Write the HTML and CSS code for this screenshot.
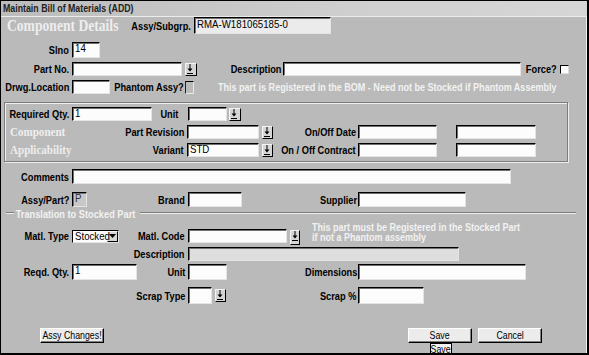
FILE: index.html
```html
<!DOCTYPE html>
<html lang="en">
<head>
    <meta charset="UTF-8">
    <title>Maintain Bill of Materials (ADD)</title>
    <link rel="stylesheet" href="styles.css">
</head>
<body>
<div class="window">
    <div class="titlebar"><span>Maintain Bill of Materials (ADD)</span></div>

    <div class="row r-head">
        <div class="heading"><span>Component Details</span></div>
        <div class="fld f-subgrp"><label><span>Assy/Subgrp.</span></label><div class="in ro"><span>RMA-W181065185-0</span></div></div>
    </div>

    <div class="row r-slno">
        <div class="fld f-slno"><label><span>Slno</span></label><div class="in"><span>14</span></div></div>
    </div>

    <div class="row r-part">
        <div class="fld f-partno"><label><span>Part No.</span></label><div class="in"></div><span class="dd"><svg viewBox="0 0 8 10" width="8" height="10"><path d="M3.5 0h1v4.5h2L4 7.5 1.5 4.5h2z M1 9h6v1H1z"/></svg></span></div>
        <div class="fld f-desc"><label class="g1"><span>Description</span></label><div class="in"></div></div>
        <div class="fld f-force"><label><span>Force?</span></label><div class="chk"></div></div>
    </div>

    <div class="row r-drwg">
        <div class="fld f-drwg"><label><span>Drwg.Location</span></label><div class="in"></div></div>
        <div class="fld f-phantom"><label class="g1"><span>Phantom Assy?</span></label><div class="chk tall"></div></div>
        <div class="note n-bom"><span>This part is Registered in the BOM - Need not be Stocked if Phantom Assembly</span></div>
    </div>

    <div class="group">
        <div class="row r-grp">
            <div class="fld f-reqqty"><label><span>Required Qty.</span></label><div class="in"><span>1</span></div></div>
            <div class="fld f-unit1"><label class="g10"><span>Unit</span></label><div class="in"></div><span class="dd"><svg viewBox="0 0 8 10" width="8" height="10"><path d="M3.5 0h1v4.5h2L4 7.5 1.5 4.5h2z M1 9h6v1H1z"/></svg></span></div>
        </div>
        <div class="row r-grp">
            <div class="side"><span>Component</span></div>
            <div class="fld f-rev"><label><span>Part Revision</span></label><div class="in"></div><span class="dd"><svg viewBox="0 0 8 10" width="8" height="10"><path d="M3.5 0h1v4.5h2L4 7.5 1.5 4.5h2z M1 9h6v1H1z"/></svg></span></div>
            <div class="fld f-onoff"><label class="g2"><span>On/Off Date</span></label><div class="in"></div></div>
            <div class="in i-onoff2"></div>
        </div>
        <div class="row r-grp">
            <div class="side"><span>Applicability</span></div>
            <div class="fld f-rev"><label><span>Variant</span></label><div class="in"><span>STD</span></div><span class="dd"><svg viewBox="0 0 8 10" width="8" height="10"><path d="M3.5 0h1v4.5h2L4 7.5 1.5 4.5h2z M1 9h6v1H1z"/></svg></span></div>
            <div class="fld f-onoff"><label class="g2"><span>On / Off Contract</span></label><div class="in"></div></div>
            <div class="in i-onoff2"></div>
        </div>
    </div>

    <div class="row r-comments">
        <div class="fld f-comments"><label><span>Comments</span></label><div class="in"></div></div>
    </div>

    <div class="row r-assy">
        <div class="fld f-assypart"><label><span>Assy/Part?</span></label><div class="in dis"><span>P</span></div></div>
        <div class="fld f-brand"><label><span>Brand</span></label><div class="in"></div></div>
        <div class="fld f-supplier"><label class="g1"><span>Supplier</span></label><div class="in"></div></div>
    </div>

    <div class="legend"><span>Translation to Stocked Part</span></div>

    <div class="row r-matl">
        <div class="fld f-matltype"><label><span>Matl. Type</span></label>
            <div class="sel"><span class="sel-text">Stocked</span><span class="sel-btn"><svg viewBox="0 0 7 4" width="7" height="4"><path d="M0 0h7L3.5 4z"/></svg></span></div>
        </div>
        <div class="fld f-matlcode"><label><span>Matl. Code</span></label><div class="in"></div><span class="dd"><svg viewBox="0 0 8 10" width="8" height="10"><path d="M3.5 0h1v4.5h2L4 7.5 1.5 4.5h2z M1 9h6v1H1z"/></svg></span></div>
        <div class="note n-stock"><span>This part must be Registered in the Stocked Part</span><span>if not a Phantom assembly</span></div>
    </div>

    <div class="row r-desc">
        <div class="fld f-desc2"><label><span>Description</span></label><div class="in ro2"></div></div>
    </div>

    <div class="row r-qty2">
        <div class="fld f-reqd"><label><span>Reqd. Qty.</span></label><div class="in"><span>1</span></div></div>
        <div class="fld f-unit2"><label><span>Unit</span></label><div class="in"></div></div>
        <div class="fld f-dim"><label class="g1"><span>Dimensions</span></label><div class="in"></div></div>
    </div>

    <div class="row r-scrap">
        <div class="fld f-scraptype"><label><span>Scrap Type</span></label><div class="in"></div><span class="dd"><svg viewBox="0 0 8 10" width="8" height="10"><path d="M3.5 0h1v4.5h2L4 7.5 1.5 4.5h2z M1 9h6v1H1z"/></svg></span></div>
        <div class="fld f-scrappct"><label class="g2"><span>Scrap %</span></label><div class="in"></div></div>
    </div>

    <div class="row r-buttons">
        <div class="btn b-assy"><span>Assy Changes!</span></div>
        <div class="btn b-save"><span>Save</span></div>
        <div class="btn b-cancel"><span>Cancel</span></div>
    </div>

    <div class="tooltip"><span>Save</span></div>
</div>
</body>
</html>
```

FILE: styles.css
```css
body {
    margin: 0;
    background: #000;
    font-family: "Liberation Sans", Arial, sans-serif;
    font-size: 11px;
    color: #000;
}
/* the original dialog uses a narrow face; squeeze the text boxes instead */
.window span {
    display: inline-block;
    white-space: nowrap;
    transform-origin: left center;
}
.window {
    position: relative;
    width: 586px;
    height: 352px;
    border: 1px solid #000;
    border-right-width: 2px;
    background: #bababa;
    box-shadow: inset -1px 0 0 #f2f2f2;
    overflow: hidden;
}
.titlebar {
    height: 15px;
    line-height: 15px;
    padding-left: 2px;
    border-bottom: 1px solid #ececec;
    background: linear-gradient(to right, #bcbcbc, #cfcfcf 60%, #d6d6d6);
    font-weight: bold;
    color: #222;
}
.titlebar span { transform: scaleX(.8); }

/* rows */
.row {
    display: flex;
    align-items: center;
}
.r-head { height: 17px; }
.r-slno { height: 16px; margin-top: 8px; }
.r-part { height: 14px; margin-top: 4px; }
.r-drwg { height: 14px; margin-top: 4px; }
.r-grp { height: 14px; }
.r-grp + .r-grp { margin-top: 4px; }
.r-comments { height: 15px; margin-top: 7px; }
.r-assy { height: 15px; margin-top: 8px; }
.r-matl { height: 14px; margin-top: 9px; }
.r-desc { height: 14px; margin-top: 4px; }
.r-qty2 { height: 16px; margin-top: 3px; }
.r-scrap { height: 17px; margin-top: 7px; }
.r-buttons { height: 15px; margin-top: 24px; }

.heading {
    width: 124px;
    padding-left: 6px;
    font-family: "Liberation Serif", serif;
    font-weight: bold;
    font-size: 16px;
    color: #eeeeee;
}
.heading span { transform: scaleX(.85); }

/* a field is label + control, its width runs up to the control's right edge */
.fld {
    display: flex;
    align-items: center;
    flex: none;
    height: 100%;
}
.fld label {
    flex: 1;
    min-width: 0;
    display: flex;
    justify-content: flex-end;
    padding-right: 3px;
    font-weight: bold;
}
.fld label span {
    transform: scaleX(.84);
    transform-origin: right center;
}
.fld label.g1 { padding-right: 1px; }
.fld label.g2 { padding-right: 2px; }
.fld label.g10 { padding-right: 10px; }

.in {
    box-sizing: border-box;
    height: 100%;
    flex: none;
    padding-left: 2px;
    background: #fcfcfc;
    border: 1px solid;
    border-color: #000 #e4e4e4 #e4e4e4 #000;
    box-shadow: inset 1px 1px 0 #707070;
    line-height: 11px;
    overflow: hidden;
}
.in span { transform: scaleX(.88); }
.in.ro { background: #ebebeb; line-height: 13px; }
.in.ro2 { background: #dedede; }
.in.dis { background: #c8c8c8; color: #333; }

.dd {
    box-sizing: border-box;
    flex: none;
    display: flex;
    align-items: center;
    justify-content: center;
    width: 12px;
    height: 13px;
    margin-left: 3px;
    background: #d6d6d6;
    border: 1px solid;
    border-color: #f4f4f4 #000 #000 #f4f4f4;
}
.dd svg { fill: #000; }

.chk {
    box-sizing: border-box;
    flex: none;
    width: 9px;
    height: 9px;
    background: #fcfcfc;
    border: 1px solid;
    border-color: #000 #ddd #ddd #000;
}
.chk.tall {
    height: 13px;
    background: #bababa;
    border-color: #000 #e8e8e8 #e8e8e8 #222;
}

.note {
    font-weight: bold;
    color: #f2f2f2;
}
.note span { transform: scaleX(.82); }
.n-bom { margin-left: 24px; }
.n-stock {
    display: flex;
    flex-direction: column;
    margin-left: 12px;
    margin-top: -7px;
    font-size: 10px;
    line-height: 10px;
}
.n-stock span { transform: scaleX(.9); }

/* top part */
.f-subgrp { width: 200px; }
.f-subgrp .in { width: 137px; }
.f-slno { width: 99px; }
.f-slno .in { width: 28px; }
.f-partno { width: 196px; }
.f-partno .in { width: 110px; }
.f-desc { width: 324px; }
.f-desc .in { width: 238px; }
.f-force { width: 48px; }
.f-drwg { width: 109px; }
.f-drwg .in { width: 38px; }
.f-phantom { width: 84px; }

/* component applicability group */
.group {
    box-sizing: border-box;
    width: 564px;
    margin: 8px 0 0 3px;
    padding: 4px 0;
    border: 1px solid #7c7c7c;
    box-shadow: inset 1px 1px 0 #eeeeee, 1px 1px 0 #eeeeee;
}
.side {
    width: 110px;
    padding-left: 5px;
    font-family: "Liberation Serif", serif;
    font-weight: bold;
    font-size: 13px;
    color: #eeeeee;
}
.side span { transform: scaleX(.85); }
.f-reqqty { width: 147px; }
.f-reqqty .in { width: 80px; }
.f-unit1 { width: 89px; }
.f-unit1 .in { width: 39px; }
.f-unit1 .dd { margin-left: 2px; }
.f-rev { width: 153px; }
.f-rev .in { width: 72px; }
.f-rev .dd { width: 11px; }
.f-onoff { width: 164px; }
.f-onoff .in { width: 79px; }
.i-onoff2 { width: 80px; margin-left: 19px; }

.f-comments { width: 510px; }
.f-comments .in { width: 439px; }
.f-assypart { width: 86px; }
.f-assypart .in { width: 15px; }
.f-brand { width: 155px; }
.f-brand .in { width: 54px; }
.f-supplier { width: 224px; }
.f-supplier .in { width: 108px; }

/* translation to stocked part */
.legend {
    display: flex;
    align-items: center;
    width: 570px;
    height: 12px;
    margin: 1px 0 0 5px;
    font-weight: bold;
    color: #f2f2f2;
}
.legend::before,
.legend::after {
    content: "";
    border-top: 1px solid #7c7c7c;
    border-bottom: 1px solid #eeeeee;
    margin-top: -2px;
}
.legend::before { width: 8px; }
.legend::after { flex: 1; margin-left: -19px; }
.legend span {
    padding: 0 1px 0 2px;
    transform: scaleX(.84);
}

.f-matltype { width: 118px; }
.sel {
    box-sizing: border-box;
    display: flex;
    align-items: center;
    flex: none;
    width: 47px;
    height: 13px;
    padding-left: 2px;
    background: #fcfcfc;
    border: 1px solid;
    border-color: #000 #e4e4e4 #e4e4e4 #000;
    overflow: hidden;
}
.sel .sel-text {
    flex: 1;
    min-width: 0;
    transform: scaleX(.88);
}
.sel .sel-btn {
    box-sizing: border-box;
    display: flex;
    align-items: center;
    justify-content: center;
    flex: none;
    width: 11px;
    height: 11px;
    background: #d6d6d6;
    border: 1px solid;
    border-color: #f4f4f4 #000 #000 #f4f4f4;
}
.f-matlcode { width: 181px; }
.f-matlcode .in { width: 99px; }
.f-matlcode .dd { width: 10px; height: 15px; margin-top: 2px; }
.f-desc2 { width: 458px; }
.f-desc2 .in { width: 271px; }
.f-reqd { width: 136px; }
.f-reqd .in { width: 65px; }
.f-unit2 { width: 90px; }
.f-unit2 .in { width: 39px; }
.f-dim { width: 299px; }
.f-dim .in { width: 168px; }
.f-scraptype { width: 225px; }
.f-scraptype .in { width: 24px; }
.f-scraptype .dd { width: 11px; }
.f-scrappct { width: 198px; }
.f-scrappct .in { width: 66px; }

/* buttons */
.btn {
    box-sizing: border-box;
    display: flex;
    justify-content: center;
    width: 64px;
    height: 15px;
    line-height: 13px;
    background: #ececec;
    border: 1px solid;
    border-color: #ffffff #000 #000 #ffffff;
    box-shadow: inset -1px -1px 0 #808080;
}
.btn span {
    transform: scaleX(.8);
    transform-origin: center;
}
.b-assy { margin-left: 39px; }
.b-save { margin-left: 304px; }
.b-cancel { margin-left: 6px; }

.tooltip {
    position: absolute;
    left: 429px;
    top: 342px;
    box-sizing: border-box;
    display: flex;
    justify-content: center;
    width: 22px;
    height: 13px;
    line-height: 11px;
    background: #f2f2f2;
    border: 1px solid #000;
}
.tooltip span {
    transform: scaleX(.8);
    transform-origin: center;
}
```
